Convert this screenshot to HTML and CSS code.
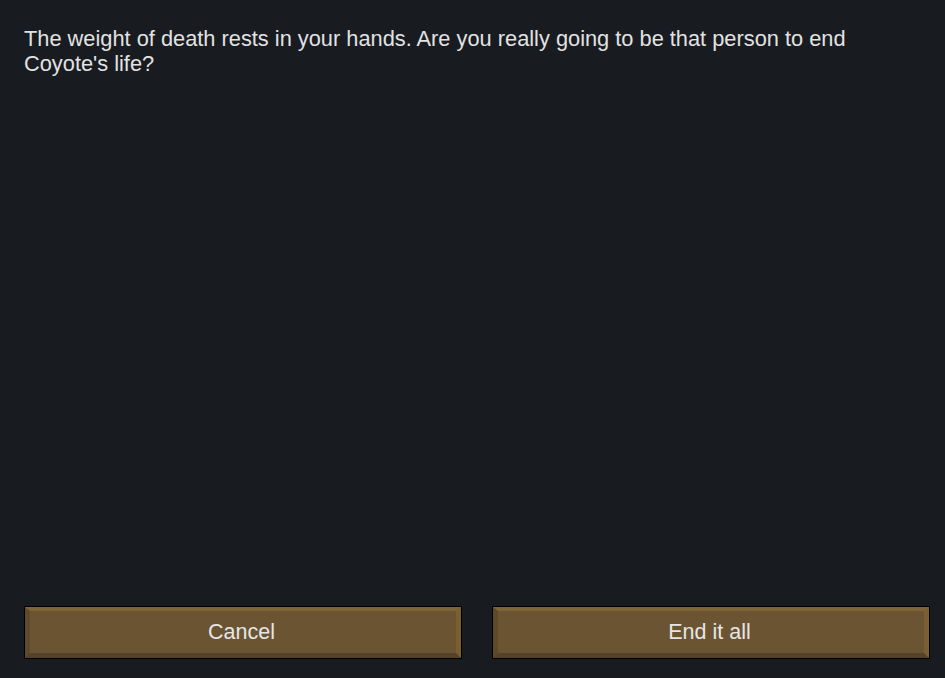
FILE: index.html
```html
<!DOCTYPE html>
<html lang="en">
<head>
    <meta charset="UTF-8">
    <meta name="viewport" content="width=device-width, initial-scale=1.0">
    <title>Confirm</title>
    <link rel="stylesheet" href="styles.css">
</head>
<body>
    <div class="dialog">
        <p class="message">The weight of death rests in your hands. Are you really going to be that person to end Coyote's life?</p>
        <div class="actions">
            <button type="button" class="bevel-button">Cancel</button>
            <button type="button" class="bevel-button">End it all</button>
        </div>
    </div>
</body>
</html>
```
FILE: styles.css
```css
/* Диалог подтверждения */
html, body {
    height: 100%;
}
body {
    margin: 0;
    background-color: #181b20;
    color: #e2e2e2;
    font-family: "Liberation Sans", Arial, sans-serif;
}
.dialog {
    box-sizing: border-box;
    height: 100%;
    display: flex;
    flex-direction: column;
    padding: 26px 15px 19px 24px;
}
.message {
    margin: 0;
    font-size: 21.8px;
    line-height: 25px;
    flex: 1;
}
.actions {
    display: flex;
    gap: 30px;
    padding: 1px;
}
.bevel-button {
    flex: 1;
    height: 51px;
    box-sizing: border-box;
    border-style: solid;
    border-width: 4px 5px 5px 5px;
    border-color: #7f6437 #7a5f35 #54432a #5e4a2b;
    box-shadow: 0 0 0 1px #000;
    padding: 0 3px 0 0;
    background-color: #6b5431;
    color: #e6e6e6;
    font-family: "Liberation Sans", Arial, sans-serif;
    font-size: 21.5px;
    cursor: pointer;
}
.bevel-button + .bevel-button {
    margin-left: 2px;
}
.bevel-button:hover {
    background-color: #765d36;
}
```
